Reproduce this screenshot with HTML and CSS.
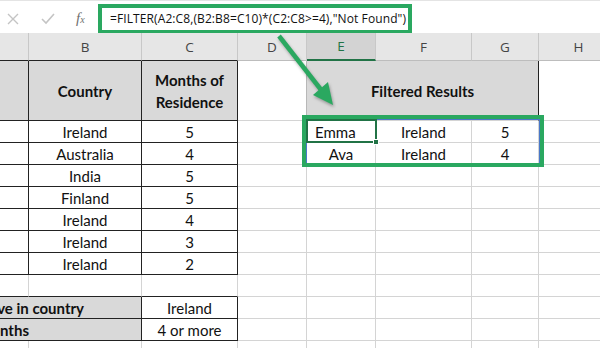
FILE: index.html
```html
<!DOCTYPE html>
<html>
<head>
    <meta charset="UTF-8">
    <title>FILTER</title>
    <link rel="stylesheet" href="styles.css">
</head>
<body>
    <div class="bar">
        <div class="tools">
            <svg class="ico" width="14" height="14" viewBox="0 0 14 14"><path d="M2 2 L12 12 M12 2 L2 12" stroke="#c4c4c4" stroke-width="1.4" fill="none"/></svg>
            <svg class="ico" width="16" height="14" viewBox="0 0 16 14"><path d="M2 7 L6 11 L14 2" stroke="#c4c4c4" stroke-width="1.6" fill="none"/></svg>
            <span class="fx">f<small>x</small></span>
        </div>
        <div class="formula">=FILTER(A2:C8,(B2:B8=C10)*(C2:C8&gt;=4),"Not Found")</div>
    </div>

    <div class="sheet">
        <!-- column letters -->
        <div class="hd dkb"></div>
        <div class="hd dkb">B</div>
        <div class="hd dkb">C</div>
        <div class="hd">D</div>
        <div class="hd sel">E</div>
        <div class="hd">F</div>
        <div class="hd">G</div>
        <div class="hd">H</div>

        <!-- row 1 -->
        <div class="c dk gr"></div>
        <div class="c dk gr b">Country</div>
        <div class="c dk gr b">Months of<br>Residence</div>
        <div class="c d1"></div>
        <div class="c gr b span3 dkr">Filtered Results</div>
        <div class="c"></div>

        <!-- rows 2-8 -->
        <div class="c dk"></div><div class="c dk">Ireland</div><div class="c dk">5</div>
        <div class="c"></div><div class="c emma">Emma</div><div class="c">Ireland</div><div class="c">5</div><div class="c"></div>

        <div class="c dk"></div><div class="c dk">Australia</div><div class="c dk">4</div>
        <div class="c"></div><div class="c">Ava</div><div class="c">Ireland</div><div class="c">4</div><div class="c"></div>

        <div class="c dk"></div><div class="c dk">India</div><div class="c dk">5</div>
        <div class="c"></div><div class="c"></div><div class="c"></div><div class="c"></div><div class="c"></div>

        <div class="c dk"></div><div class="c dk">Finland</div><div class="c dk">5</div>
        <div class="c"></div><div class="c"></div><div class="c"></div><div class="c"></div><div class="c"></div>

        <div class="c dk"></div><div class="c dk">Ireland</div><div class="c dk">4</div>
        <div class="c"></div><div class="c"></div><div class="c"></div><div class="c"></div><div class="c"></div>

        <div class="c dk"></div><div class="c dk">Ireland</div><div class="c dk">3</div>
        <div class="c"></div><div class="c"></div><div class="c"></div><div class="c"></div><div class="c"></div>

        <div class="c dk"></div><div class="c dk">Ireland</div><div class="c dk">2</div>
        <div class="c"></div><div class="c"></div><div class="c"></div><div class="c"></div><div class="c"></div>

        <!-- row 9 -->
        <div class="c dkb"></div><div class="c dkb"></div><div class="c dkb"></div>
        <div class="c"></div><div class="c"></div><div class="c"></div><div class="c"></div><div class="c"></div>

        <!-- row 10, 11 -->
        <div class="c dk gr b span2 lbl1">Live in country</div><div class="c dk">Ireland</div>
        <div class="c"></div><div class="c"></div><div class="c"></div><div class="c"></div><div class="c"></div>

        <div class="c dk gr b span2 lbl2">Months</div><div class="c dk">4 or more</div>
        <div class="c"></div><div class="c"></div><div class="c"></div><div class="c"></div><div class="c"></div>

        <!-- row 12 -->
        <div class="c"></div><div class="c"></div><div class="c"></div><div class="c"></div>
        <div class="c"></div><div class="c"></div><div class="c"></div><div class="c"></div>
    </div>

    <!-- spill range / active cell / highlight -->
    <div class="spill"></div>
    <div class="active"><span class="handle"></span></div>
    <div class="hilite"></div>

    <svg class="arrow" width="600" height="348" viewBox="0 0 600 348">
        <line x1="279" y1="36" x2="322" y2="91" stroke="#2aa860" stroke-width="4.5"/>
        <polygon points="333,105 313,95 328,82" fill="#2aa860"/>
    </svg>
</body>
</html>
```

FILE: styles.css
```css
* {
    margin: 0;
    padding: 0;
    box-sizing: border-box;
}
body {
    position: relative;
    width: 600px;
    height: 348px;
    overflow: hidden;
    background: #fff;
    font-family: Lato, "Open Sans", sans-serif;
    color: #111;
}

/* formula bar */
.bar {
    display: flex;
    align-items: center;
    height: 33px;
    padding-top: 3px;
    background: #fff;
    border-top: 1px solid #e4e4e4;
}
.tools {
    display: flex;
    align-items: center;
    width: 98px;
    height: 30px;
    padding-left: 6px;
}
.ico {
    margin-right: 20px;
}
.fx {
    font-family: "Liberation Serif", serif;
    font-style: italic;
    font-size: 15px;
    color: #707070;
}
.fx small {
    font-size: 10px;
}
.formula {
    width: 314px;
    height: 30px;
    border: 4px solid #2aa860;
    padding-left: 8px;
    font-family: "Open Sans", sans-serif;
    font-size: 12px;
    letter-spacing: 0.1px;
    line-height: 22px;
    color: #111;
    white-space: nowrap;
    overflow: hidden;
}

/* sheet grid */
.sheet {
    display: grid;
    grid-template-columns: 120px 113px 96px 69px 69px 96px 67px 80px;
    grid-template-rows: 28px 60px repeat(11, 22px);
    margin-left: -91px;
    width: 710px;
}
.hd {
    display: flex;
    align-items: center;
    justify-content: center;
    background: #e6e6e6;
    border-right: 1px solid #c8c8c8;
    border-bottom: 1px solid #bdbdbd;
    font-family: "Open Sans", sans-serif;
    font-size: 13.5px;
    color: #444;
}
.hd.sel {
    background: #d3d3d3;
    color: #217346;
    border-bottom: 2px solid #217346;
}
.c {
    display: flex;
    align-items: center;
    justify-content: center;
    text-align: center;
    border-right: 1px solid #d4d4d4;
    border-bottom: 1px solid #d4d4d4;
    font-size: 15px;
    line-height: 22px;
}
.dk {
    border-right-color: #222;
    border-bottom-color: #222;
}
.dkb {
    border-bottom-color: #222;
}
.dkr {
    border-right-color: #222;
}
.gr {
    background: #d9d9d9;
}
.b {
    font-weight: bold;
}
.d1 {
    border-right-color: #b8b8b8;
}
.span2 {
    grid-column: span 2;
}
.span3 {
    grid-column: span 3;
}
.emma {
    justify-content: flex-start;
    padding-left: 8px;
}
.lbl1 {
    justify-content: flex-end;
    padding-right: 57px;
}
.lbl2 {
    justify-content: flex-end;
    padding-right: 112px;
}

/* overlays */
.spill {
    position: absolute;
    left: 306px;
    top: 119px;
    width: 234px;
    height: 45px;
    border: 1px solid #4a78c8;
}
.active {
    position: absolute;
    left: 306px;
    top: 119px;
    width: 71px;
    height: 24px;
    border: 2px solid #217346;
}
.handle {
    position: absolute;
    right: -4px;
    bottom: -4px;
    width: 6px;
    height: 6px;
    background: #217346;
    border: 1px solid #fff;
}
.hilite {
    position: absolute;
    left: 302px;
    top: 115px;
    width: 242px;
    height: 52px;
    border: 4px solid #2aa860;
}
.arrow {
    position: absolute;
    left: 0;
    top: 0;
    pointer-events: none;
    filter: drop-shadow(1px 2px 1.5px rgba(0, 0, 0, .3));
}
```
